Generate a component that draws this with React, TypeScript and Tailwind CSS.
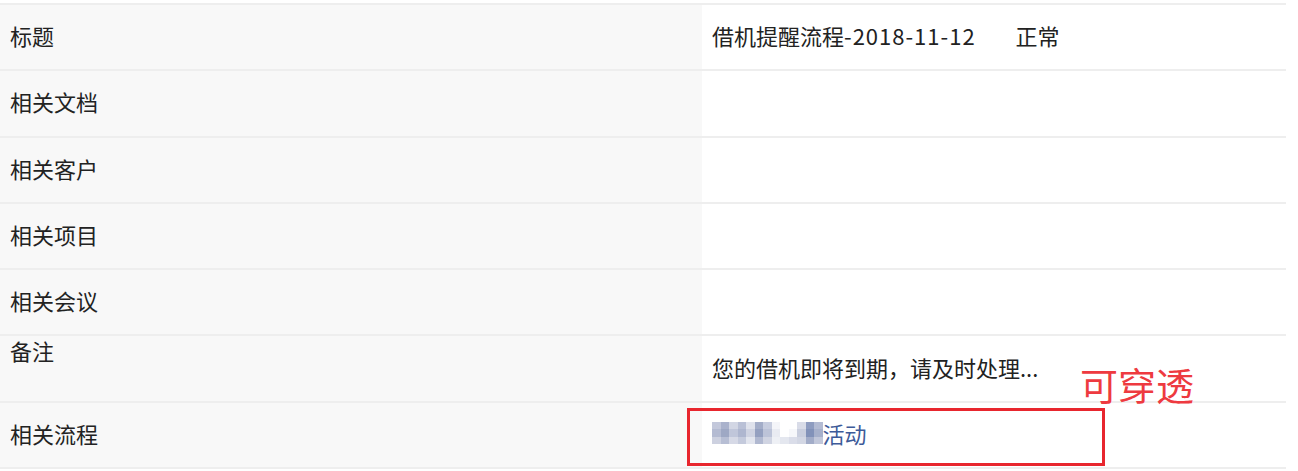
const font = { fontFamily: '"Noto Sans CJK SC", "Noto Sans", sans-serif' };

const rows: { label: string; top?: boolean }[] = [
  { label: "标题" },
  { label: "相关文档" },
  { label: "相关客户" },
  { label: "相关项目" },
  { label: "相关会议" },
  { label: "备注", top: true },
  { label: "相关流程" },
];

// redacted mosaic before "活动"
const mosaic = [
  ["bg-[#c3c8db]", "bg-[#aab2cc]", "bg-[#d2d6e4]", "bg-[#b9c0d6]", "bg-[#dfe2ec]", "bg-[#a3adc8]", "bg-[#c7cddf]", "bg-[#f4f5f9]", "bg-[#ffffff]", "bg-[#ffffff]", "bg-[#d9dce8]", "bg-[#8e9cc0]", "bg-[#b3bbd3]"],
  ["bg-[#b4bbd2]", "bg-[#9ea8c4]", "bg-[#c0c6da]", "bg-[#aeb6cf]", "bg-[#cfd3e2]", "bg-[#94a0c0]", "bg-[#bcc3d8]", "bg-[#e9ebf2]", "bg-[#ffffff]", "bg-[#f6f7fa]", "bg-[#c9cede]", "bg-[#8292b9]", "bg-[#a6b0cb]"],
  ["bg-[#cdd1e0]", "bg-[#b7bed4]", "bg-[#d6d9e6]", "bg-[#c4cadc]", "bg-[#e2e5ee]", "bg-[#b0b8d0]", "bg-[#d0d4e2]", "bg-[#eef0f5]", "bg-[#e4e7ef]", "bg-[#dadde9]", "bg-[#d3d7e4]", "bg-[#a2acc8]", "bg-[#c1c7da]"],
];

function Value({ index }: { index: number }) {
  if (index === 0)
    return (
      <span className="flex items-center">
        <span>
          借机提醒流程<span className="tracking-[1px]">-2018-11-12</span>
        </span>
        <span className="ml-[40px]">正常</span>
      </span>
    );
  if (index === 5) return <span>您的借机即将到期，请及时处理...</span>;
  if (index === 6)
    return (
      <span className="flex items-center">
        <span className="flex flex-col">
          {mosaic.map((line, i) => (
            <span key={i} className="flex">
              {line.map((c, j) => (
                <span key={j} className={`block h-[7.5px] w-[8.5px] ${c}`} />
              ))}
            </span>
          ))}
        </span>
        <span className="text-[#3d5a99]">活动</span>
      </span>
    );
  return null;
}

export default function App() {
  return (
    <div className="relative h-[471px] w-[1298px] overflow-hidden bg-white text-[22px] leading-none text-[#222]" style={font}>
      <div className="mt-[3px] w-[1286px] border-t-2 border-[#eeeeee]">
        {rows.map((row, i) => (
          <div key={row.label} className="grid h-[66.3px] grid-cols-[702px_1fr] border-b-2 border-[#eeeeee]">
            <div className={`flex bg-[#f8f8f8] px-[10px] ${row.top ? "items-start pt-[3px]" : "items-center pb-[4px]"}`}>
              {row.label}
            </div>
            <div className="flex items-center bg-white px-[10px] pb-[4px]">
              <Value index={i} />
            </div>
          </div>
        ))}
      </div>

      {/* annotation */}
      <div className="absolute left-[687px] top-[408px] h-[58px] w-[418px] border-[3px] border-[#e8262e]" />
      <div className="absolute left-[1080px] top-[365px] text-[38px] leading-none text-[#ee3a40]">可穿透</div>
    </div>
  );
}
